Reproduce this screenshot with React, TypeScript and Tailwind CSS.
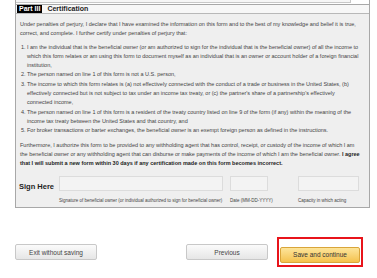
const intro = [
    "Under penalties of perjury, I declare that I have examined the information on this form and to the best of my knowledge and belief it is true,",
    "correct, and complete. I further certify under penalties of perjury that:",
]

const items = [
    [
        "I am the individual that is the beneficial owner (or am authorized to sign for the individual that is the beneficial owner) of all the income to",
        "which this form relates or am using this form to document myself as an individual that is an owner or account holder of a foreign financial",
        "institution,",
    ],
    ["The person named on line 1 of this form is not a U.S. person,"],
    [
        "The income to which this form relates is (a) not effectively connected with the conduct of a trade or business in the United States, (b)",
        "effectively connected but is not subject to tax under an income tax treaty, or (c) the partner's share of a partnership's effectively",
        "connected income,",
    ],
    [
        "The person named on line 1 of this form is a resident of the treaty country listed on line 9 of the form (if any) within the meaning of the",
        "income tax treaty between the United States and that country, and",
    ],
    ["For broker transactions or barter exchanges, the beneficial owner is an exempt foreign person as defined in the instructions."],
]

const fields = [
    { label: "Signature of beneficial owner (or individual authorized to sign for beneficial owner)", width: "w-[164px] ml-[1px]" },
    { label: "Date (MM-DD-YYYY)", width: "w-[38px] ml-[7px]" },
    { label: "Capacity in which acting", width: "w-[61px] ml-[30px]" },
]

export default function App() {
    return (
        <div className="w-[377px] h-[278px] bg-white font-['Liberation_Sans',Arial,sans-serif] text-[#333] overflow-hidden">
            {/* Form panel */}
            <div className="ml-[15px] w-[355px] border-x border-b border-[#a8a8a8] bg-[#efefef]">
                <div className="h-[5px] border-b border-[#a8a8a8] bg-white">
                    <div className="w-[335px] h-[3px] border-b border-r border-[#c8c8c8] bg-[#f6f6f6]" />
                </div>
                <div className="h-[9px] flex items-center border-b border-[#b8b8b8] bg-[#f7f7f7]">
                    <span className="h-[8px] px-[2px] ml-[1px] bg-black text-white text-[7px] leading-[8px] font-bold">Part III</span>
                    <span className="ml-[5px] text-[7px] leading-[8px] font-bold text-[#222]">Certification</span>
                </div>
                <div className="pl-[4px] pt-[6px] text-[5.5px] leading-[9.3px] text-[#444] whitespace-nowrap">
                    <div>
                        {intro.map((line) => (
                            <div key={line}>{line}</div>
                        ))}
                    </div>
                    <ol className="mt-[4px] pl-[1px]">
                        {items.map((lines, i) => (
                            <li key={i} className="flex">
                                <span className="w-[6px] shrink-0">{i + 1}.</span>
                                <div>
                                    {lines.map((line) => (
                                        <div key={line}>{line}</div>
                                    ))}
                                </div>
                            </li>
                        ))}
                    </ol>
                    <div className="mt-[5px]">
                        <div>Furthermore, I authorize this form to be provided to any withholding agent that has control, receipt, or custody of the income of which I am</div>
                        <div>
                            the beneficial owner or any withholding agent that can disburse or make payments of the income of which I am the beneficial owner.{" "}
                            <span className="font-bold text-[#222]">I agree</span>
                        </div>
                        <div className="font-bold text-[#222]">that I will submit a new form within 30 days if any certification made on this form becomes incorrect.</div>
                    </div>
                </div>

                {/* Sign here */}
                <div className="flex items-start mt-[8px] pb-[3px]">
                    <div className="w-[42px] pl-[3px] pt-[6px] text-[7.5px] font-bold text-[#222] leading-[10px]">Sign Here</div>
                    {fields.map((f) => (
                        <div key={f.label} className={f.width}>
                            <div className="h-[15px] border border-[#dcdcdc] bg-[#f3f3f3]" />
                            <div className="mt-[7px] text-[4.5px] leading-[6px] text-[#444] whitespace-nowrap">{f.label}</div>
                        </div>
                    ))}
                </div>
            </div>

            {/* Actions */}
            <div className="flex items-center mt-[29px] pl-[15px] pr-[14px]">
                <button className="w-[82px] h-[16px] rounded-[2px] border border-[#c8c8c8] bg-gradient-to-b from-[#fbfbfb] to-[#e6e6e6] text-[6.5px] text-[#444]">
                    Exit without saving
                </button>
                <button className="ml-auto w-[82px] h-[16px] rounded-[2px] border border-[#c8c8c8] bg-gradient-to-b from-[#fbfbfb] to-[#e6e6e6] text-[6.5px] text-[#444]">
                    Previous
                </button>
                <div className="ml-[9px] p-px border-2 border-[#e8141b]">
                    <button className="w-[80px] h-[16px] rounded-[2px] border border-[#d9a53a] bg-gradient-to-b from-[#fde59a] to-[#f4c24a] text-[6.5px] text-[#333]">
                        Save and continue
                    </button>
                </div>
            </div>
        </div>
    )
}
